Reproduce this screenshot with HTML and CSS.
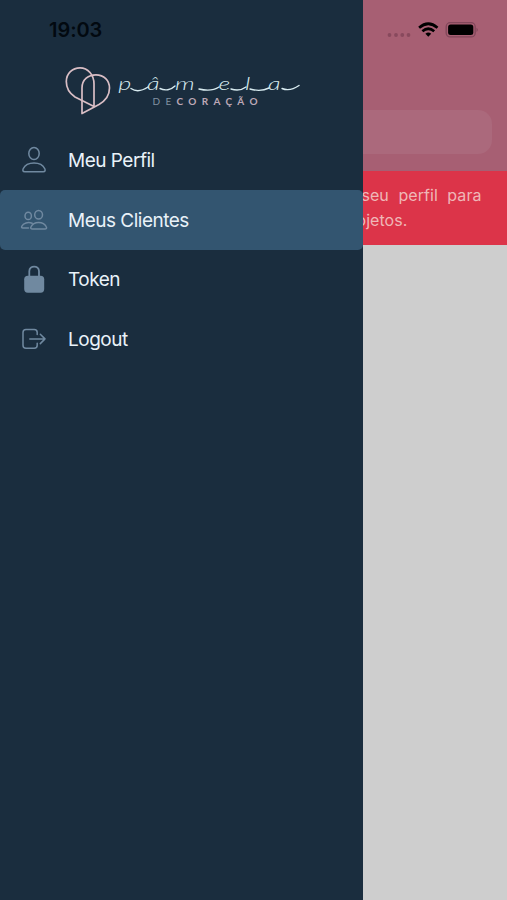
FILE: index.html
```html
<!DOCTYPE html>
<html lang="pt-BR">
<head>
<meta charset="utf-8">
<title>Menu</title>
<link rel="stylesheet" href="styles.css">
</head>
<body>
<div class="screen">
  <aside class="drawer">
    <div class="clock">19:03</div>
    <div class="brand">
      <svg width="246" height="56" viewBox="60 62 246 56" fill="none">
        <g stroke="#d9bec5" stroke-width="1.700" stroke-linejoin="round" stroke-linecap="round">
          <path d="M94 106.500L75 97C69 93 66.300 87.500 66.300 81.500C66.300 73.500 72.500 67.800 80 67.800C88 67.800 94 75 94 84Z"/>
          <path d="M82 113.500V88C82 79.500 88.500 74.800 96 74.800C104 74.800 109.500 80.500 109.500 88C109.500 96 105 101 99 104.500Z"/>
        </g>
        <text class="script" transform="scale(1.400 1)" x="84.500 105 125 156 175 191.500" y="90">pâmela</text>
        <path d="M131 88.500C136 92 142 91 148 87M160 88.500C165 91 171 90 175 86M199 89C207 91 213 91 219 87M231 89C237 91 242 90 246 87M250 89C257 91 263 91 269 88M282 88.500C288 91 294 89 299 85.500" stroke="#d8ebf0" stroke-width="1.400" stroke-linecap="round"/>
        <text class="tagline" x="152.500" y="104.800" textLength="105"><tspan class="thin">DE</tspan>CORAÇÃO</text>
      </svg>
    </div>
    <nav class="menu">
      <a class="item">
        <svg class="icon" viewBox="0 0 28 28"><ellipse cx="14" cy="7.600" rx="5.200" ry="6"/><path d="M4.800 25.800C2.800 25.800 2.500 24.400 3.200 22.800C5 19 9 17.100 14 17.100S23 19 24.800 22.800C25.500 24.400 25.200 25.800 23.200 25.800Z"/></svg>
        <span>Meu Perfil</span>
      </a>
      <a class="item active">
        <svg class="icon" viewBox="0 0 28 28"><ellipse cx="18.600" cy="8.700" rx="3.900" ry="4.300"/><path d="M12.500 23C10.700 23 10.400 22 11 20.800C12.300 18 15 16.500 18.600 16.500S25 18 26.300 20.800C26.900 22 26.500 23 24.800 23Z"/><ellipse cx="8.200" cy="9.900" rx="3.200" ry="3.600"/><path d="M12.200 17.300C8 15.700 3.300 17 1.800 20.300C1.300 21.400 1.700 21.900 2.800 21.900H8.500"/></svg>
        <span>Meus Clientes</span>
      </a>
      <a class="item">
        <svg class="icon" viewBox="0 0 28 28"><path d="M9.300 13V6.300C9.300 0 19 0 19 6.300V13" stroke-width="1.800"/><rect class="solid" x="4.200" y="10.700" width="20" height="17" rx="3.600"/></svg>
        <span>Token</span>
      </a>
      <a class="item">
        <svg class="icon" viewBox="0 0 28 28"><path d="M17.200 9.400V7.500Q17.200 4.500 14.200 4.500H6Q3 4.500 3 7.500V20.300Q3 23.300 6 23.300H14.200Q17.200 23.300 17.200 20.300V18.300M9.800 13.900H25M20.300 9.200L25 13.900L20.300 18.600"/></svg>
        <span>Logout</span>
      </a>
    </nav>
  </aside>
  <main class="page">
    <header class="top">
      <svg class="status" width="100" height="24" viewBox="0 0 100 24">
        <g fill="#88495d"><circle cx="6.500" cy="17" r="1.900"/><circle cx="13" cy="17" r="1.900"/><circle cx="19.300" cy="17" r="1.900"/><circle cx="25.500" cy="17" r="1.900"/></g>
        <g fill="none" stroke="#000" stroke-width="2.700"><path d="M36.100 9.800Q45.300 1.700 54.500 9.800"/><path d="M39.400 13.200Q45.300 8.300 51.200 13.200"/></g>
        <path d="M42.400 15.700Q45.300 13.500 48.200 15.700L45.300 18.800Z"/>
        <rect x="63.200" y="4.700" width="29" height="14.200" rx="4" fill="none" stroke="#81475a" stroke-width="1.300"/>
        <rect x="65.100" y="6.600" width="25.200" height="10.400" rx="2.500"/>
        <path d="M93.500 9.700Q96.100 11.800 93.500 13.900Z" fill="#81475a"/>
      </svg>
      <div class="search"></div>
    </header>
    <div class="alert">
      <p class="line wide">seu perfil para</p>
      <p class="line end">ojetos.</p>
    </div>
  </main>
</div>
</body>
</html>
```
FILE: styles.css
```css
* {
  box-sizing: border-box;
}

body {
  margin: 0;
  font-family: Inter, "Liberation Sans", sans-serif;
}

.screen {
  display: flex;
  width: 507px;
  height: 900px;
  overflow: hidden;
  background: #cecece;
}

.drawer {
  flex: 0 0 362.500px;
  background: #1a2d3e;
}

.clock {
  height: 62px;
  padding: 18px 0 0 49px;
  font-size: 20px;
  font-weight: 600;
  line-height: 24px;
  letter-spacing: -0.050px;
  color: #020910;
}

.brand {
  height: 68.500px;
  padding-left: 60px;
}

.brand svg {
  display: block;
}

.script {
  font: italic 300 18px Lato, sans-serif;
  fill: #d8ebf0;
}

.tagline {
  font: 700 10px Lato, sans-serif;
  fill: #bda8b6;
}

.thin {
  font-weight: 400;
  fill: #8292a2;
}

.item {
  display: flex;
  align-items: center;
  gap: 20px;
  height: 59.500px;
  padding-left: 20px;
  border-radius: 5px;
  font-size: 19px;
  letter-spacing: -0.500px;
  color: #e9f2f9;
}

.item span {
  padding-top: 1px;
}

.active {
  background: #335570;
}

.icon {
  width: 28px;
  height: 28px;
  fill: none;
  stroke: #7089a0;
  stroke-width: 1.500;
  stroke-linecap: round;
  stroke-linejoin: round;
}

.solid {
  fill: #7089a0;
  stroke: none;
}

.page {
  flex: 1;
  min-width: 0;
  overflow: hidden;
}

.top {
  height: 171px;
  padding-top: 18px;
  background: #a75f73;
}

.status {
  display: block;
  margin-left: 20px;
}

.search {
  width: 129px;
  height: 44px;
  margin-top: 68px;
  border-radius: 0 14px 14px 0;
  background: #ab697c;
}

.alert {
  height: 74px;
  padding-top: 12px;
  background: #dc3449;
}

.line {
  margin: 0;
  font-size: 16px;
  line-height: 25px;
  letter-spacing: 0.050px;
  white-space: nowrap;
  color: #efb7b7;
}

.wide {
  margin-left: -1px;
  word-spacing: 5px;
}

.end {
  margin-left: -6px;
}
```
